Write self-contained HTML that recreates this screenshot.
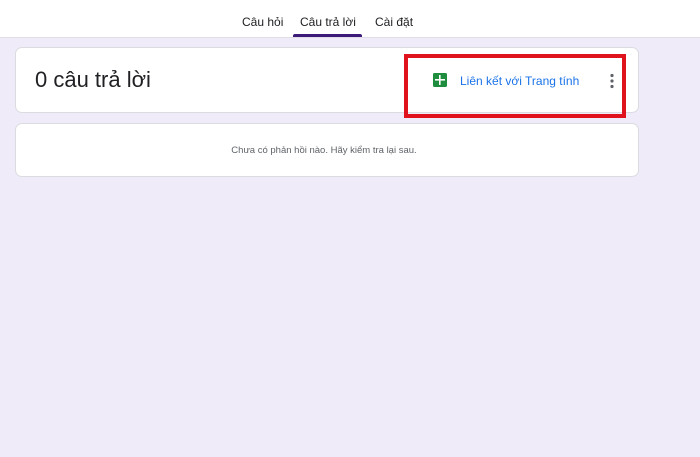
<!DOCTYPE html>
<html><head><meta charset="utf-8"><style>
body{margin:0;width:700px;height:457px;background:#efebf8;font-family:"Liberation Sans",sans-serif;position:relative;overflow:hidden}
.hdr{position:absolute;left:0;top:0;width:700px;height:37px;background:#fff;border-bottom:1px solid #e0dce8}
.tab{position:absolute;top:15px;font-size:12px;color:#202124}
.ul{position:absolute;left:293px;top:34px;width:69px;height:3px;background:#3c1a78;border-radius:2px 2px 0 0}
.card{position:absolute;left:15px;width:622px;background:#fff;border:1px solid #dadce0;border-radius:7px}
.red{position:absolute;left:404px;top:54px;width:214px;height:56px;border:4px solid #e0121b}
</style></head><body>
<div class="hdr">
<span class="tab" style="left:242px">Câu hỏi</span>
<span class="tab" style="left:300px">Câu trả lời</span>
<span class="tab" style="left:375px">Cài đặt</span>
<div class="ul"></div>
</div>
<div class="card" style="top:47px;height:64px">
<div style="position:absolute;left:19px;top:19px;font-size:22px;color:#202124">0 câu trả lời</div>
<svg style="position:absolute;left:417px;top:25px" width="14" height="14" viewBox="0 0 14 14"><rect width="14" height="14" rx="1.5" fill="#1e8e3e"/><rect x="2" y="6" width="10" height="1.6" fill="#fff"/><rect x="6" y="2" width="1.6" height="10" fill="#fff"/></svg>
<div style="position:absolute;left:444px;top:26px;font-size:12px;color:#1a73e8">Liên kết với Trang tính</div>
<svg style="position:absolute;left:593px;top:25px" width="6" height="16"><circle cx="3" cy="2.5" r="1.6" fill="#5f6368"/><circle cx="3" cy="8" r="1.6" fill="#5f6368"/><circle cx="3" cy="13.5" r="1.6" fill="#5f6368"/></svg>
</div>
<div class="card" style="top:123px;height:52px">
<div style="position:absolute;left:-3px;width:622px;top:21px;text-align:center;font-size:9.5px;color:#5f6368">Chưa có phản hồi nào. Hãy kiểm tra lại sau.</div>
</div>
<div class="red"></div>
</body></html>
